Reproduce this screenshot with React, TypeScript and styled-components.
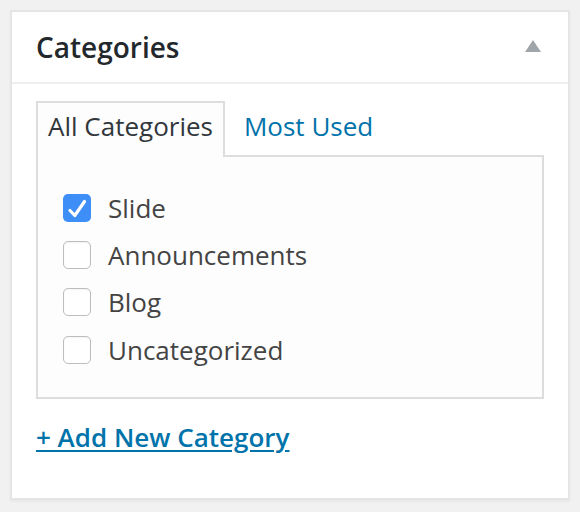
import React from "react";
import styled, { createGlobalStyle } from "styled-components";

const Global = createGlobalStyle`
  html, body { margin: 0; padding: 0; background: #f1f1f1; }
  body { font-family: "Open Sans", "Noto Sans", sans-serif; -webkit-font-smoothing: antialiased; }
`;

const Page = styled.div`
  padding: 10px;
  width: 560px;
`;

const Box = styled.div`
  background: #fff;
  border: 2px solid #e5e5e5;
  box-shadow: 0 2px 2px rgba(0, 0, 0, 0.04);
`;

const Header = styled.div`
  display: flex;
  align-items: center;
  justify-content: space-between;
  height: 70px;
  padding: 0 27px 0 24px;
  border-bottom: 2px solid #eee;
`;

const Title = styled.h2`
  margin: 0;
  font-size: 28px;
  font-weight: 600;
  line-height: 70px;
  color: #23282d;
`;

const Toggle = styled.div`
  width: 0;
  height: 0;
  border-left: 8px solid transparent;
  border-right: 8px solid transparent;
  border-bottom: 12px solid #a0a5aa;
  margin-top: -2px;
`;

const Body = styled.div`
  padding: 17px 24px 43px 24px;
`;

const Tabs = styled.ul`
  display: flex;
  margin: 0;
  padding: 0;
  list-style: none;
`;

const Tab = styled.li<{ $active?: boolean }>`
  font-size: 26px;
  line-height: 36px;
  padding: 5px 10px 13px;
  margin-left: ${(p) => (p.$active ? "0" : "7px")};
  border: 2px solid ${(p) => (p.$active ? "#ddd" : "transparent")};
  border-bottom: none;
  background: ${(p) => (p.$active ? "#fdfdfd" : "transparent")};
  color: ${(p) => (p.$active ? "#32373c" : "#0073aa")};
  margin-bottom: -2px;
  position: relative;
  z-index: 1;
`;

const Panel = styled.div`
  background: #fdfdfd;
  border: 2px solid #ddd;
  height: 240px;
  padding: 27px 0 0 25px;
  box-sizing: border-box;
  height: 244px;
`;

const List = styled.ul`
  margin: 0;
  padding: 0;
  list-style: none;
`;

const Row = styled.li`
  display: flex;
  align-items: center;
  height: 47.3px;
  font-size: 26px;
  color: #444;
`;

const Check = styled.span<{ $checked?: boolean }>`
  display: inline-flex;
  align-items: center;
  justify-content: center;
  width: 28px;
  height: 28px;
  box-sizing: border-box;
  border-radius: 5px;
  margin-right: 17px;
  background: ${(p) => (p.$checked ? "#3e8ef7" : "#fff")};
  border: ${(p) => (p.$checked ? "none" : "1.5px solid #bdbdbd")};
  box-shadow: ${(p) => (p.$checked ? "none" : "inset 0 1px 2px rgba(0,0,0,0.05)")};
`;

const AddLink = styled.a`
  display: inline-block;
  margin-top: 20px;
  font-size: 26px;
  font-weight: 600;
  line-height: 36px;
  color: #0073aa;
  text-decoration: underline;
  text-decoration-thickness: 2px;
  text-underline-offset: 3px;
`;

const items = [
  { label: "Slide", checked: true },
  { label: "Announcements", checked: false },
  { label: "Blog", checked: false },
  { label: "Uncategorized", checked: false },
];

export default function App() {
  return (
    <>
      <Global />
      <Page>
        <Box>
          <Header>
            <Title>Categories</Title>
            <Toggle />
          </Header>
          <Body>
            <Tabs>
              <Tab $active>All Categories</Tab>
              <Tab>Most Used</Tab>
            </Tabs>
            <Panel>
              <List>
                {items.map((it) => (
                  <Row key={it.label}>
                    <Check $checked={it.checked}>
                      {it.checked && (
                        <svg width="28" height="28" viewBox="0 0 28 28">
                          <path
                            d="M7 16.5 L11.8 21.5 L21.5 7.5"
                            fill="none"
                            stroke="#fff"
                            strokeWidth="3.2"
                            strokeLinecap="round"
                            strokeLinejoin="round"
                          />
                        </svg>
                      )}
                    </Check>
                    {it.label}
                  </Row>
                ))}
              </List>
            </Panel>
            <AddLink href="#">+ Add New Category</AddLink>
          </Body>
        </Box>
      </Page>
    </>
  );
}
